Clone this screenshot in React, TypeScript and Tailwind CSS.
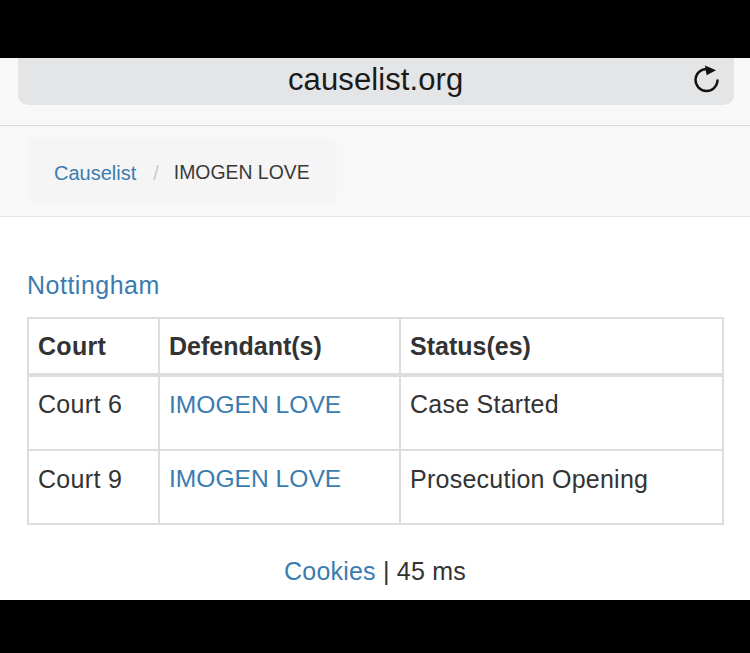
const rows = [
  { court: "Court 6", name: "IMOGEN LOVE", status: "Case Started", height: "h-[75px]", top: "pt-[12px]" },
  { court: "Court 9", name: "IMOGEN LOVE", status: "Prosecution Opening", height: "h-[74px]", top: "pt-[13px]" },
];

function ReloadIcon() {
  return (
    <svg width="28" height="30" viewBox="0 0 28 30" fill="none" className="mb-[5px]">
      <path d="M25.5 16.5A11 11 0 1 1 14.5 5" stroke="#111" strokeWidth="2.4" strokeLinecap="round" />
      <path d="M13 1.5 L24 6.2 L14.6 11.2 Z" fill="#111" />
    </svg>
  );
}

export default function App() {
  return (
    <div className="flex h-[653px] w-[750px] flex-col bg-black font-['Liberation_Sans',Arial,sans-serif] text-[#333]">
      <div className="h-[58px] shrink-0" />
      <div className="flex h-[68px] shrink-0 flex-col border-b border-[#d9d9d9] bg-[#f8f8f8]">
        <div className="ml-[18px] mr-[16px] flex h-[47px] items-center rounded-b-[10px] bg-[#e4e5e7] pr-[14px]">
          <span className="mb-[4px] ml-[270px] flex-1 text-[31px] leading-[43px] tracking-[0.1px] text-[#1a1a1a]">causelist.org</span>
          <ReloadIcon />
        </div>
      </div>
      <div className="h-[91px] shrink-0 border-b border-[#e4e4e4] bg-[#f8f8f8] px-[27px] pt-[12px]">
        <div className="flex h-[65px] w-[310px] items-center rounded-[8px] bg-[#f5f5f5] pl-[27px] pt-[4px] text-[20px]">
          <a className="text-[#3a7cb0]">Causelist</a>
          <span className="ml-[17px] text-[#ccc]">/</span>
          <span className="ml-[15px] text-[19.4px] text-[#3a3a3a]">IMOGEN LOVE</span>
        </div>
      </div>
      <div className="flex-1 bg-white px-[27px]">
        <h4 className="mt-[52px] text-[25px] leading-[32px] tracking-[0.5px] text-[#3a7cb0]">Nottingham</h4>
        <table className="mt-[16px] w-[697px] table-fixed border-collapse border-2 border-[#ddd] text-[25px]">
          <thead>
            <tr className="h-[57px] border-b-[4px] border-[#ddd] text-left">
              <th className="w-[131px] border-2 border-b-[4px] border-[#ddd] pl-[9px] pt-[2px] font-bold tracking-[0.3px]">Court</th>
              <th className="w-[241px] border-2 border-b-[4px] border-[#ddd] pl-[9px] pt-[2px] font-bold">Defendant(s)</th>
              <th className="border-2 border-b-[4px] border-[#ddd] pl-[9px] pt-[2px] font-bold">Status(es)</th>
            </tr>
          </thead>
          <tbody>
            {rows.map((row) => (
              <tr key={row.court} className={row.height}>
                <td className={`border-2 border-[#ddd] pl-[9px] align-top leading-[30px] tracking-[0.3px] ${row.top}`}>{row.court}</td>
                <td className="border-2 border-[#ddd] pl-[9px] pt-[13px] align-top text-[24.6px] leading-[30px] text-[#3a7cb0]">{row.name}</td>
                <td className={`border-2 border-[#ddd] pl-[9px] align-top leading-[30px] tracking-[0.25px] ${row.top}`}>{row.status}</td>
              </tr>
            ))}
          </tbody>
        </table>
        <p className="mt-[30px] text-center text-[25px] leading-[32px] tracking-[0.2px] whitespace-pre">
          <a className="text-[#3a7cb0]">Cookies</a> | 45 ms
        </p>
      </div>
      <div className="h-[53px] shrink-0" />
    </div>
  );
}
